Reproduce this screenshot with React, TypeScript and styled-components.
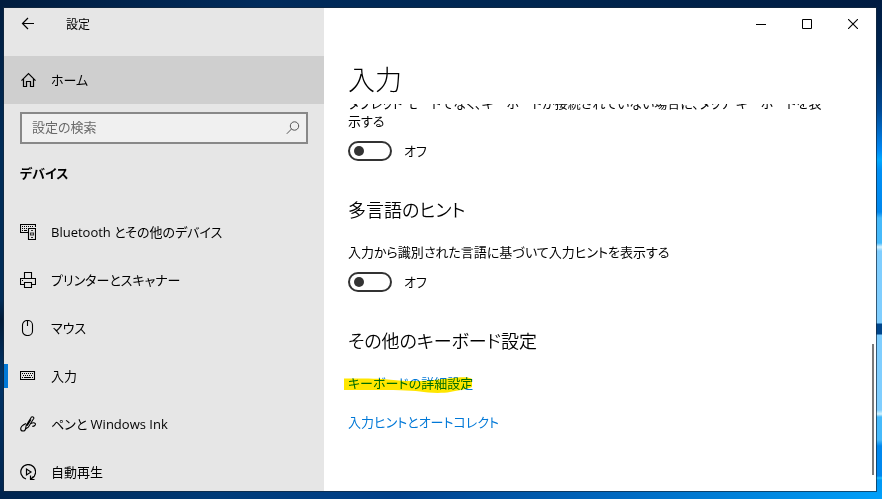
import React from "react";
import styled, { createGlobalStyle, css } from "styled-components";

const GlobalStyle = createGlobalStyle`
  * { box-sizing: border-box; }
  body {
    margin: 0;
    overflow: hidden;
    color: #000;
    font: 13px/18px "Open Sans", "Noto Sans CJK JP", sans-serif;
    font-feature-settings: "palt";
  }
  button, input { font: inherit; font-feature-settings: inherit; color: inherit; }
  h1, h2, p { margin: 0; }
`;

const Desktop = styled.div`
  height: 100vh;
  padding: 8px 6px 8px 4px;
  display: flex;
  background:
    linear-gradient(
        #001c42 0, #002754 60px, #004a96 110px, #0088f4 150px, #00aaff 160px, #0090f5 170px,
        #0088ee 212px, #46bafb 218px, #46bafb 243px, #d8f3ff 247px, #7fceff 251px,
        #7fceff 323px, #00468c 324px, #00468c 334px, #7fceff 335px, #7fceff 410px,
        #d5f5ff 414px, #46bafb 417px, #46bafb 440px, #0088ee 446px, #0088ee 476px,
        #20c0ff 478px, #0098f5 480px, #00a0fa 100%
      )
      right / 6px 100% no-repeat,
    linear-gradient(90deg, #00244e, #003b78 25%, #00408a 45%, #0068c0 70%, #00a0fa) bottom / 100% 8px no-repeat,
    linear-gradient(90deg, #001c3e, #002b5c 30%, #002650 60%, #001c42) top / 100% 8px no-repeat,
    linear-gradient(#001c3e, #002c58 30%, #002c58 60%, #001a38 64%, #003468 75%, #00244e);
`;

const Window = styled.div`
  flex: 1;
  min-width: 0;
  display: flex;
  overflow: hidden;
  background: #fff;
  box-shadow: 0 0 0 1px rgba(20, 40, 60, 0.7);
`;

const Sidebar = styled.aside`
  flex: 0 0 320px;
  overflow: hidden;
  background: #e6e6e6;
`;

const TitleRow = styled.header`
  height: 48px;
  padding: 0 16px;
  display: flex;
  align-items: flex-start;
  gap: 30px;
  font-size: 12px;
  line-height: 34px;
`;

const BackButton = styled.button`
  height: 32px;
  padding: 0;
  border: 0;
  background: none;
  display: flex;
  align-items: center;
`;

const NavLink = styled.a<{ $home?: boolean; $active?: boolean }>`
  height: 48px;
  padding-left: 12px;
  border-left: 4px solid transparent;
  display: flex;
  align-items: center;
  gap: 15px;
  color: #000;
  line-height: 20px;
  text-decoration: none;
  ${(p) => p.$home && css`
    background: #cfcfcf;
    border-left-color: #cfcfcf;
  `}
  ${(p) => p.$active && css`
    background: linear-gradient(#0078d7, #0078d7) left / 4px 24px no-repeat border-box;
  `}
`;

const SearchBox = styled.form`
  height: 32px;
  margin: 8px 16px 20px;
  padding: 0 6px 0 10px;
  display: flex;
  align-items: center;
  border: 2px solid #888;
  background: #f0f0f0;
`;

const SearchInput = styled.input`
  flex: 1;
  min-width: 0;
  height: 26px;
  padding: 0 0 2px;
  border: 0;
  outline: 0;
  background: none;
  &::placeholder { color: #6a6a6a; opacity: 1; }
`;

const IconButton = styled.button`
  padding: 0;
  border: 0;
  background: none;
  display: flex;
`;

const GroupTitle = styled.h2`
  padding: 0 16px;
  margin-bottom: 26px;
  font-size: 13px;
  line-height: 18px;
  font-weight: 600;
`;

const Main = styled.main`
  flex: 1;
  min-width: 0;
  display: flex;
  flex-direction: column;
`;

const Caption = styled.div`
  display: flex;
  justify-content: flex-end;
`;

const CaptionButton = styled.button`
  width: 46px;
  height: 32px;
  padding: 0;
  border: 0;
  background: none;
  display: flex;
  align-items: center;
  justify-content: center;
`;

const PageTitle = styled.h1`
  padding: 20px 24px 0;
  height: 64px;
  font-size: 27px;
  line-height: 40px;
  font-weight: 300;
`;

const ScrollRow = styled.div`
  flex: 1;
  min-height: 0;
  display: flex;
  overflow: hidden;
`;

const Content = styled.div`
  padding: 0 48px 0 24px;
  margin-top: -10px;
`;

const Viewport = styled.div`
  flex: 1;
  min-width: 0;
  overflow: hidden;
`;

const Track = styled.div`
  width: 4px;
  padding: 240px 2px 16px 0;
  display: flex;
`;

const Thumb = styled.div`
  flex: 1;
  background: #7a7a7a;
`;

const Description = styled.p`
  line-height: 18px;
`;

const ToggleLabel = styled.label`
  display: flex;
  align-items: center;
  gap: 12px;
  height: 20px;
  margin-top: 11px;
`;

const Toggle = styled.input`
  appearance: none;
  width: 44px;
  height: 20px;
  margin: 0;
  padding: 3px 4px;
  border: 2px solid #333;
  border-radius: 10px;
  display: flex;
  &::before {
    content: "";
    width: 10px;
    height: 10px;
    border-radius: 5px;
    background: #333;
  }
  &:checked { justify-content: flex-end; }
`;

const SectionTitle = styled.h2`
  margin: 36px 0 20px;
  font-size: 18px;
  line-height: 26px;
  font-weight: 350;
`;

const Links = styled.nav`
  display: flex;
  flex-direction: column;
  align-items: flex-start;
  gap: 21px;
`;

const SettingLink = styled.a`
  position: relative;
  color: #0078d7;
  line-height: 18px;
  text-decoration: none;
`;

const Marker = styled.svg`
  position: absolute;
  left: -5px;
  top: 3px;
  mix-blend-mode: multiply;
  pointer-events: none;
`;

type GlyphProps = { size?: number; width?: number; children: React.ReactNode };
const Glyph = ({ size = 16, width = 1.1, children }: GlyphProps) => (
  <svg width={size} height={size} viewBox={`0 0 ${size} ${size}`} fill="none" stroke="#000" strokeWidth={width} aria-hidden="true">
    {children}
  </svg>
);

const HomeIcon = () => (
  <Glyph width={1.2}>
    <path d="M1.5 8.7 8.5 1.6l7 7.1M3.5 7v7.5h3V9.5h4v5h3V7" />
  </Glyph>
);
const DevicesIcon = () => (
  <Glyph>
    <path d="M8 8.5H.5v-8h15V3M2 2.5h1m1 0h1m1 0h1m1 0h1m1 0h1m1 0h1M2 4.5h1m1 0h1m1 0h1M2 6.5h1m1 0h3" />
    <path d="M8.5 4.5h7v11h-7z" />
    <path d="M11 6.5h2M10.5 9h3v2h-3zM11 13.5h2" stroke="#333" />
  </Glyph>
);
const PrinterIcon = () => (
  <Glyph>
    <path d="M4.5 6.5v-6h7v6M4.5 12.5h-4v-6h15v6h-4M4.5 10.5h7v5h-7zM2 8.5h1" />
  </Glyph>
);
const MouseIcon = () => (
  <Glyph>
    <rect x="2.5" y="0.5" width="10" height="15" rx="4.5" />
    <path d="M7.5 1v5" />
  </Glyph>
);
const KeyboardIcon = () => (
  <Glyph>
    <path d="M.5 3.5h14v8H.5zM2 5.5h1m1 0h1m1 0h1m1 0h1m1 0h1m1 0h1M3 7.5h1m1 0h1m1 0h1m1 0h1m1 0h1M2 9.5h1m1 0h7m1 0h1" />
  </Glyph>
);
const PenIcon = () => (
  <Glyph width={1.1}>
    <path d="M5.5 13 6.2 9.5 11.3 1.2c.9-1.1 3.1 0 2.4 1.4L8.3 11.2zM11 3.5 7.2 9.7" />
    <path d="M6 7.5C3.5 8.7.7 10.2.7 12.7c0 3 4.8 3.2 4.8 0M10.8 7.5c3-1.6 5.5-.4 4.3 1.6-.7 1-1.8 1.3-2.8 1.3" />
  </Glyph>
);
const AutoplayIcon = () => (
  <Glyph width={1.2}>
    <path d="M6 15A7.4 7.4 0 1 1 12 14.3M10.5 11.5v4h4M10.5 15.5l3-3M6.5 5v6L11 8z" />
  </Glyph>
);

const devices = [
  { label: "Bluetooth とその他のデバイス", icon: <DevicesIcon /> },
  { label: "プリンターとスキャナー", icon: <PrinterIcon /> },
  { label: "マウス", icon: <MouseIcon /> },
  { label: "入力", icon: <KeyboardIcon />, active: true },
  { label: "ペンと Windows Ink", icon: <PenIcon /> },
  { label: "自動再生", icon: <AutoplayIcon /> },
];

export default function App() {
  return (
    <Desktop>
      <GlobalStyle />
      <Window>
        <Sidebar>
          <TitleRow>
            <BackButton aria-label="戻る">
              <Glyph width={1.2}>
                <path d="M14 7.5H2.5M8 2 2.5 7.5 8 13" />
              </Glyph>
            </BackButton>
            <span>設定</span>
          </TitleRow>
          <NavLink href="#home" $home>
            <HomeIcon />
            ホーム
          </NavLink>
          <SearchBox role="search" onSubmit={(e) => e.preventDefault()}>
            <SearchInput type="text" placeholder="設定の検索" aria-label="設定の検索" />
            <IconButton aria-label="検索">
              <svg width="14" height="14" viewBox="0 0 14 14" fill="none" stroke="#555" strokeWidth="1">
                <circle cx="8.5" cy="5" r="4.2" />
                <path d="M5.5 8 .8 12.8" />
              </svg>
            </IconButton>
          </SearchBox>
          <GroupTitle>デバイス</GroupTitle>
          <nav>
            {devices.map((d) => (
              <NavLink key={d.label} href="#device" $active={d.active} aria-current={d.active ? "page" : undefined}>
                {d.icon}
                {d.label}
              </NavLink>
            ))}
          </nav>
        </Sidebar>
        <Main>
          <Caption>
            <CaptionButton aria-label="最小化">
              <Glyph size={10} width={1}><path d="M0 5.5h10" /></Glyph>
            </CaptionButton>
            <CaptionButton aria-label="最大化">
              <Glyph size={10} width={1}><path d="M.5.5h9v9h-9z" /></Glyph>
            </CaptionButton>
            <CaptionButton aria-label="閉じる">
              <Glyph size={10}><path d="m0 0 10 10M10 0 0 10" /></Glyph>
            </CaptionButton>
          </Caption>
          <PageTitle>入力</PageTitle>
          <ScrollRow>
            <Viewport>
              <Content>
                <Description>
                  タブレット モードでなく、キーボードが接続されていない場合に、タッチ キーボードを表示する
                </Description>
                <ToggleLabel>
                  <Toggle type="checkbox" role="switch" />
                  オフ
                </ToggleLabel>
                <SectionTitle>多言語のヒント</SectionTitle>
                <Description>入力から識別された言語に基づいて入力ヒントを表示する</Description>
                <ToggleLabel>
                  <Toggle type="checkbox" role="switch" />
                  オフ
                </ToggleLabel>
                <SectionTitle>その他のキーボード設定</SectionTitle>
                <Links>
                  <SettingLink href="#keyboard">
                    キーボードの詳細設定
                    <Marker width="130" height="18" viewBox="0 0 130 18" aria-hidden="true">
                      <path
                        d="M1 1.5C20 1.5 34 1 56 3.5c22 1.5 38-.5 54-2.5 6-1 17-1.5 19 1v8c-6 3-16 3.5-22 5-8 1.5-22 1-30-.5-16-2-46-1.5-76-1.5z"
                        fill="#ffe600"
                      />
                    </Marker>
                  </SettingLink>
                  <SettingLink href="#hints">入力ヒントとオートコレクト</SettingLink>
                </Links>
              </Content>
            </Viewport>
            <Track>
              <Thumb />
            </Track>
          </ScrollRow>
        </Main>
      </Window>
    </Desktop>
  );
}
